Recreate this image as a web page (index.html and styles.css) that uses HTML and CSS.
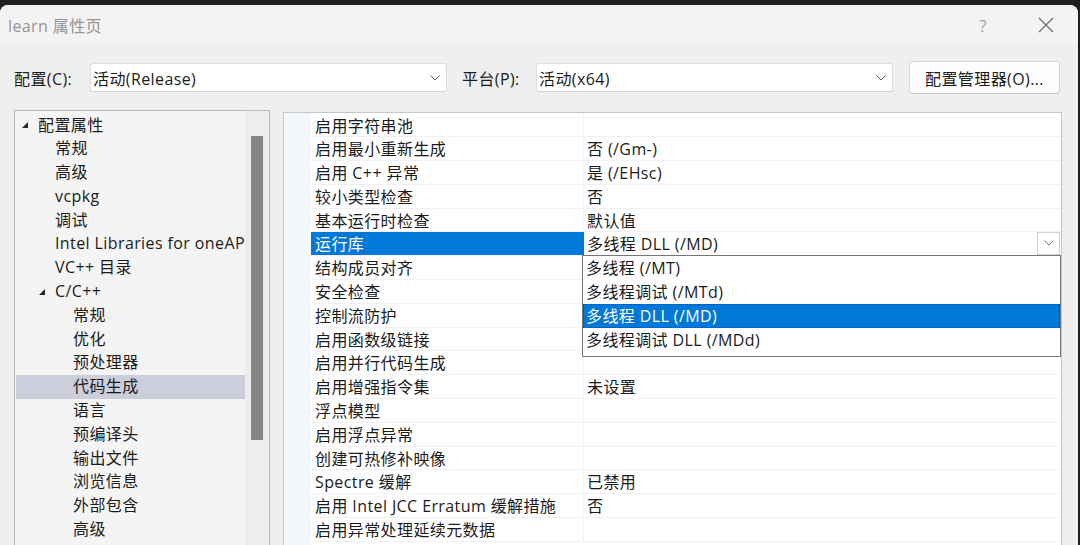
FILE: index.html
```html
<!DOCTYPE html>
<html lang="zh-CN">

<head>
    <meta charset="UTF-8">
    <title>learn 属性页</title>
    <link rel="stylesheet" href="styles.css">
</head>

<body>
    <div class="window">
        <div class="titlebar">
            <span class="title">learn 属性页</span>
            <span class="help">?</span>
            <svg class="close" width="16" height="16" viewBox="0 0 16 16">
                <path d="M1 1 L15 15 M15 1 L1 15" stroke="#6e6e6e" stroke-width="1.3" fill="none" />
            </svg>
        </div>

        <div class="config-row">
            <label class="config-label">配置(C):</label>
            <div class="select">
                <span>活动(Release)</span>
                <svg class="chevron" width="10" height="6" viewBox="0 0 10 6">
                    <path d="M0.5 0.5 L5 5 L9.5 0.5" stroke="#606060" stroke-width="1" fill="none" />
                </svg>
            </div>
            <label class="config-label platform">平台(P):</label>
            <div class="select">
                <span>活动(x64)</span>
                <svg class="chevron" width="10" height="6" viewBox="0 0 10 6">
                    <path d="M0.5 0.5 L5 5 L9.5 0.5" stroke="#606060" stroke-width="1" fill="none" />
                </svg>
            </div>
            <button class="manager">配置管理器(O)...</button>
        </div>

        <div class="main">
            <div class="tree">
                <ul class="tree-list">
                    <li class="lvl0"><span class="toggle"><i></i></span>配置属性</li>
                    <li class="lvl1"><span class="toggle"></span>常规</li>
                    <li class="lvl1"><span class="toggle"></span>高级</li>
                    <li class="lvl1"><span class="toggle"></span>vcpkg</li>
                    <li class="lvl1"><span class="toggle"></span>调试</li>
                    <li class="lvl1"><span class="toggle"></span>Intel Libraries for oneAP</li>
                    <li class="lvl1"><span class="toggle"></span>VC++ 目录</li>
                    <li class="lvl1"><span class="toggle"><i></i></span>C/C++</li>
                    <li class="lvl2"><span class="toggle"></span>常规</li>
                    <li class="lvl2"><span class="toggle"></span>优化</li>
                    <li class="lvl2"><span class="toggle"></span>预处理器</li>
                    <li class="lvl2 selected"><span class="toggle"></span>代码生成</li>
                    <li class="lvl2"><span class="toggle"></span>语言</li>
                    <li class="lvl2"><span class="toggle"></span>预编译头</li>
                    <li class="lvl2"><span class="toggle"></span>输出文件</li>
                    <li class="lvl2"><span class="toggle"></span>浏览信息</li>
                    <li class="lvl2"><span class="toggle"></span>外部包含</li>
                    <li class="lvl2"><span class="toggle"></span>高级</li>
                </ul>
                <div class="scrollbar">
                    <div class="thumb"></div>
                </div>
            </div>

            <div class="grid">
                <div class="gutter"></div>
                <div class="rows">
                    <div class="row"><div class="name">启用字符串池</div><div class="value"></div></div>
                    <div class="row"><div class="name">启用最小重新生成</div><div class="value">否 (/Gm-)</div></div>
                    <div class="row"><div class="name">启用 C++ 异常</div><div class="value">是 (/EHsc)</div></div>
                    <div class="row"><div class="name">较小类型检查</div><div class="value">否</div></div>
                    <div class="row"><div class="name">基本运行时检查</div><div class="value">默认值</div></div>
                    <div class="row selected">
                        <div class="name">运行库</div>
                        <div class="value editing">
                            <span class="value-text">多线程 DLL (/MD)</span>
                            <span class="drop-btn">
                                <svg width="10" height="6" viewBox="0 0 10 6">
                                    <path d="M0.5 0.5 L5 5 L9.5 0.5" stroke="#707070" stroke-width="1" fill="none" />
                                </svg>
                            </span>
                            <ul class="dropdown">
                                <li>多线程 (/MT)</li>
                                <li>多线程调试 (/MTd)</li>
                                <li class="active">多线程 DLL (/MD)</li>
                                <li>多线程调试 DLL (/MDd)</li>
                            </ul>
                        </div>
                    </div>
                    <div class="row"><div class="name">结构成员对齐</div><div class="value"></div></div>
                    <div class="row"><div class="name">安全检查</div><div class="value"></div></div>
                    <div class="row"><div class="name">控制流防护</div><div class="value"></div></div>
                    <div class="row"><div class="name">启用函数级链接</div><div class="value"></div></div>
                    <div class="row"><div class="name">启用并行代码生成</div><div class="value"></div></div>
                    <div class="row"><div class="name">启用增强指令集</div><div class="value">未设置</div></div>
                    <div class="row"><div class="name">浮点模型</div><div class="value"></div></div>
                    <div class="row"><div class="name">启用浮点异常</div><div class="value"></div></div>
                    <div class="row"><div class="name">创建可热修补映像</div><div class="value"></div></div>
                    <div class="row"><div class="name">Spectre 缓解</div><div class="value">已禁用</div></div>
                    <div class="row"><div class="name">启用 Intel JCC Erratum 缓解措施</div><div class="value">否</div></div>
                    <div class="row"><div class="name">启用异常处理延续元数据</div><div class="value"></div></div>
                </div>
            </div>
        </div>
    </div>
</body>

</html>
```

FILE: styles.css
```css
* {
    box-sizing: border-box;
    margin: 0;
    padding: 0;
}

body {
    background: #1f1f1f;
    height: 545px;
    overflow: hidden;
    font-family: "Open Sans", "Noto Sans CJK SC", sans-serif;
    font-size: 16px;
    letter-spacing: 0.4px;
    color: #1b1b1b;
}

.window {
    margin-top: 5px;
    width: 1078px;
    height: 540px;
    background: #efefef;
    border-radius: 8px 8px 0 0;
    overflow: hidden;
    display: flex;
    flex-direction: column;
}

.titlebar {
    height: 40px;
    flex: none;
    background: #f3f3f3;
    display: flex;
    align-items: center;
    padding-left: 8px;
}

.titlebar .title {
    flex: 1;
    color: #959595;
    font-size: 16px;
}

.titlebar .help {
    color: #a0a0a0;
    font-size: 17px;
    width: 20px;
    text-align: center;
    margin-right: 45px;
}

.titlebar .close {
    margin-right: 24px;
}

.config-row {
    display: flex;
    align-items: center;
    height: 35px;
    margin-top: 15px;
    padding-left: 14px;
}

.config-label {
    width: 76px;
}

.config-label.platform {
    width: 74px;
    margin-left: 15px;
}

.select {
    width: 357px;
    height: 29px;
    background: #fff;
    border: 1px solid #dedede;
    border-bottom-color: #cfcfcf;
    border-radius: 3px;
    display: flex;
    align-items: center;
    justify-content: space-between;
    padding: 0 6px 0 2px;
}

.manager {
    margin-left: 16px;
    width: 151px;
    height: 33px;
    background: #fdfdfd;
    border: 1px solid #d6d6d6;
    border-bottom-color: #c4c4c4;
    border-radius: 4px;
    font: inherit;
    letter-spacing: inherit;
    color: inherit;
}

.main {
    flex: 1;
    display: flex;
    margin-top: 15px;
    padding-left: 14px;
    gap: 13px;
    min-height: 0;
}

/* left tree */
.tree {
    width: 256px;
    border: 1px solid #b9b9b9;
    border-bottom: none;
    background: #f4f4f4;
    display: flex;
    overflow: hidden;
}

.tree-list {
    list-style: none;
    width: 230px;
    padding: 2px 0 0 1px;
}

.tree-list li {
    height: 23.8px;
    line-height: 23.8px;
    padding-top: 1px;
    display: flex;
    align-items: center;
    white-space: nowrap;
    overflow: hidden;
}

.tree-list .lvl0 {
    padding-left: 6px;
}

.tree-list .lvl1 {
    padding-left: 23px;
}

.tree-list .lvl2 {
    padding-left: 41px;
}

.tree-list li.selected {
    background: #cccedb;
}

.toggle {
    width: 16px;
    flex: none;
    display: flex;
    align-items: center;
}

.toggle i {
    width: 0;
    height: 0;
    border-left: 6px solid transparent;
    border-bottom: 6px solid #262626;
}

.scrollbar {
    flex: 1;
    background: #ededed;
    padding: 25px 6px 0 6px;
}

.scrollbar .thumb {
    height: 304px;
    background: #858585;
}

/* right property grid */
.grid {
    width: 779px;
    margin-top: 2px;
    border: 1px solid #c6c6c6;
    border-bottom: none;
    background: #fff;
    display: flex;
}

.gutter {
    width: 27px;
    flex: none;
    background: #f3f7fc;
}

.rows {
    flex: 1;
    padding-top: 0.5px;
}

.row {
    display: flex;
    height: 23.8px;
    line-height: 24px;
    border-bottom: 1px solid #f1f1f4;
}

.row .name {
    width: 273px;
    flex: none;
    padding-left: 4px;
    border-right: 1px solid #f1f1f4;
    white-space: nowrap;
}

.row .value {
    flex: 1;
    padding-left: 3px;
    white-space: nowrap;
}

.row.selected .name {
    background: #0078d7;
    color: #fff;
    border-right-color: #0078d7;
}

.value.editing {
    position: relative;
    display: flex;
    align-items: center;
    padding-right: 1px;
}

.value-text {
    flex: 1;
}

.drop-btn {
    width: 23px;
    height: 23px;
    border: 1px solid #d2d2d2;
    background: #fff;
    display: flex;
    align-items: center;
    justify-content: center;
    margin-top: -1px;
}

.dropdown {
    position: absolute;
    top: 100%;
    left: -2px;
    right: 0;
    height: 102px;
    list-style: none;
    background: #fff;
    border: 1px solid #767676;
    z-index: 2;
}

.dropdown li {
    height: 23.8px;
    line-height: 24px;
    padding-left: 3px;
}

.dropdown li.active {
    background: #0078d7;
    color: #fff;
    outline: 1px dotted #3a3a3a;
    outline-offset: -1px;
}
```
